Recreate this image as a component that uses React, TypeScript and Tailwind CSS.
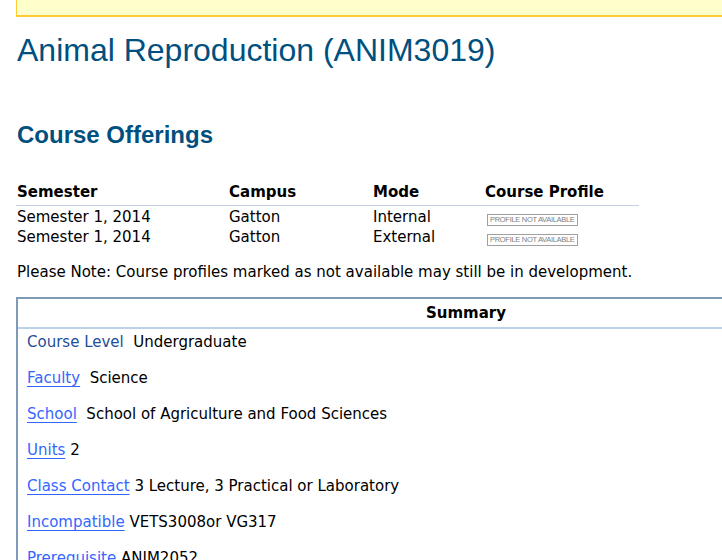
import React from "react"

const rows = [
  { sem: "Semester 1, 2014", campus: "Gatton", mode: "Internal" },
  { sem: "Semester 1, 2014", campus: "Gatton", mode: "External" },
]

const summary = [
  { label: "Course Level", value: "Undergraduate", link: false, gap: true },
  { label: "Faculty", value: "Science", link: true, gap: true },
  { label: "School", value: "School of Agriculture and Food Sciences", link: true, gap: true },
  { label: "Units", value: "2", link: true, gap: false },
  { label: "Class Contact", value: "3 Lecture, 3 Practical or Laboratory", link: true, gap: false },
  { label: "Incompatible", value: "VETS3008or VG317", link: true, gap: false },
  { label: "Prerequisite", value: "ANIM2052", link: true, gap: false },
]

function ProfileBadge() {
  return (
    <span className="inline-block border border-[#a0a0a0] px-[2px] text-[7.5px] leading-[10px] text-[#808080] font-['Liberation_Sans',Arial,sans-serif] tracking-[-0.3px]">
      PROFILE NOT AVAILABLE
    </span>
  )
}

export default function App() {
  return (
    <div className="h-[560px] w-[722px] overflow-hidden bg-white font-['DejaVu_Sans',Verdana,sans-serif] text-black">
      <div className="w-[914px] pl-4">
        <div className="h-[17px] border-b-2 border-l border-[#ffcc33] bg-[#ffffcc]" />

        <h1 className="mt-[15px] pl-px font-['Liberation_Sans',Arial,sans-serif] text-[32px] leading-[36px] text-[#00507f]">
          Animal Reproduction (ANIM3019)
        </h1>

        <h2 className="mt-[53px] pl-px font-['Liberation_Sans',Arial,sans-serif] text-[24px] font-bold leading-[28px] text-[#00507f]">
          Course Offerings
        </h2>

        <table className="mt-[33px] w-[623px] border-collapse text-[15px] leading-[20px]">
          <thead>
            <tr className="border-b border-[#c3d1e2]">
              <th className="w-[213px] pb-[3px] pl-px text-left font-bold">Semester</th>
              <th className="w-[144px] pb-[3px] text-left font-bold">Campus</th>
              <th className="w-[112px] pb-[3px] text-left font-bold">Mode</th>
              <th className="pb-[3px] text-left font-bold">Course Profile</th>
            </tr>
          </thead>
          <tbody>
            {rows.map((r, i) => (
              <tr key={i}>
                <td className={i === 0 ? "pl-px pt-px" : "pl-px"}>{r.sem}</td>
                <td className={i === 0 ? "pt-px" : ""}>{r.campus}</td>
                <td className={i === 0 ? "pt-px" : ""}>{r.mode}</td>
                <td className={i === 0 ? "pl-[2px] pt-px align-middle" : "pl-[2px] align-middle"}>
                  <ProfileBadge />
                </td>
              </tr>
            ))}
          </tbody>
        </table>

        <p className="mt-[15px] pl-px text-[15px] leading-[20px]">
          Please Note: Course profiles marked as not available may still be in development.
        </p>

        <div className="mt-[15px] border-l-2 border-t-2 border-[#7f99b8]">
          <div className="border-b-2 border-[#bcd0e6] py-[4px] text-center text-[15px] font-bold leading-[20px]">
            Summary
          </div>
          <div className="px-[9px] pt-[3px] text-[15px] leading-[20px]">
            {summary.map((s) => (
              <div key={s.label} className="mb-[16px]">
                {s.link ? (
                  <a href="#" className="text-[#3366ff] underline decoration-1 underline-offset-[3px]">
                    {s.label}
                  </a>
                ) : (
                  <span className="text-[#1f4e99]">{s.label}</span>
                )}
                {s.gap ? "\u00a0 " : " "}
                {s.value}
              </div>
            ))}
          </div>
        </div>
      </div>
    </div>
  )
}
